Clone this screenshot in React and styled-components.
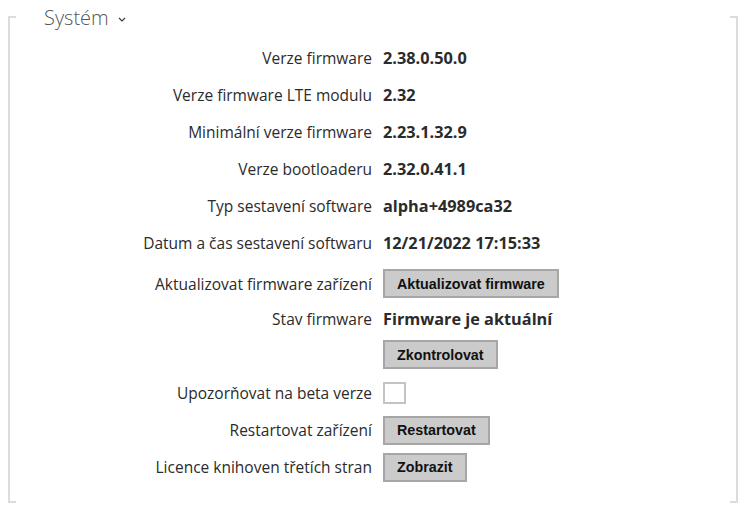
import React from "react";
import styled, { createGlobalStyle } from "styled-components";

const GlobalStyle = createGlobalStyle`
  body {
    margin: 0;
    background: #fff;
    font-family: "Open Sans", "Noto Sans", sans-serif;
    color: #333;
  }
`;

const Page = styled.div`
  padding: 16px 0 0 8px;
  width: 750px;
  height: 516px;
  box-sizing: border-box;
`;

const Frame = styled.section`
  position: relative;
  width: 730px;
  height: 487px;
  box-sizing: border-box;
  border-left: 2px solid #dcdcdc;
  border-right: 2px solid #dcdcdc;
  padding-top: 23.5px;

  &::before,
  &::after {
    content: "";
    position: absolute;
    left: 0;
    right: 0;
    height: 2px;
    pointer-events: none;
    background: linear-gradient(to right, #dcdcdc 6px, transparent 6px, transparent calc(100% - 6px), #dcdcdc calc(100% - 6px));
  }
  &::before {
    top: 0;
  }
  &::after {
    bottom: 0;
  }
`;

const Legend = styled.h2`
  position: absolute;
  top: -8px;
  left: 32px;
  margin: 0;
  padding: 0 2px;
  background: #fff;
  display: flex;
  align-items: center;
  gap: 9px;
  font-size: 20px;
  line-height: 20px;
  font-weight: 300;
  color: #555;
`;

const Rows = styled.div`
  display: grid;
  grid-template-columns: 362px auto;
  column-gap: 11px;
`;

const Row = styled.div`
  display: contents;
`;

const Label = styled.div`
  height: ${(p) => p.h}px;
  margin-top: ${(p) => p.mt || 0}px;
  display: flex;
  align-items: center;
  justify-content: flex-end;
  font-size: 15.5px;
  white-space: nowrap;
  color: #2b2b2b;
`;

const Value = styled.div`
  height: ${(p) => p.h}px;
  margin-top: ${(p) => p.mt || 0}px;
  display: flex;
  align-items: center;
  font-size: 16.3px;
  font-weight: 700;
  white-space: nowrap;
  color: #2b2b2b;
`;

const Button = styled.button`
  height: 29px;
  box-sizing: border-box;
  padding: 0 12px;
  border: 2px solid #a6a6a6;
  background: #cbcbcb;
  font-family: "Liberation Sans", Arial, sans-serif;
  font-weight: 700;
  font-size: 14.3px;
  color: #111;
  cursor: pointer;
`;

const Checkbox = styled.span`
  display: block;
  width: 23px;
  height: 22px;
  box-sizing: border-box;
  border: 2px solid #c4c4c4;
  background: #fff;
`;

const Chevron = () => (
  <svg width="8" height="5" viewBox="0 0 8 5" style={{ marginTop: 2 }}>
    <path d="M1 1 L4 4 L7 1" fill="none" stroke="#333a4a" strokeWidth="1.2" />
  </svg>
);

const rows = [
  { label: "Verze firmware", value: "2.38.0.50.0" },
  { label: "Verze firmware LTE modulu", value: "2.32" },
  { label: "Minimální verze firmware", value: "2.23.1.32.9" },
  { label: "Verze bootloaderu", value: "2.32.0.41.1" },
  { label: "Typ sestavení software", value: "alpha+4989ca32" },
  { label: "Datum a čas sestavení softwaru", value: "12/21/2022 17:15:33" },
  { label: "Aktualizovat firmware zařízení", button: "Aktualizovat firmware", h: 38, mt: 3 },
  { label: "Stav firmware", value: "Firmware je aktuální", h: 33 },
  { label: "", button: "Zkontrolovat", h: 38 },
  { label: "Upozorňovat na beta verze", checkbox: true, h: 38 },
  { label: "Restartovat zařízení", button: "Restartovat" },
  { label: "Licence knihoven třetích stran", button: "Zobrazit" },
];

export default function App() {
  return (
    <Page>
      <GlobalStyle />
      <Frame>
        <Legend>
          Systém <Chevron />
        </Legend>
        <Rows>
          {rows.map((r, i) => {
            const h = r.h || 37;
            return (
              <Row key={i}>
                <Label h={h} mt={r.mt}>{r.label}</Label>
                <Value h={h} mt={r.mt}>
                  {r.button ? <Button>{r.button}</Button> : r.checkbox ? <Checkbox /> : r.value}
                </Value>
              </Row>
            );
          })}
        </Rows>
      </Frame>
    </Page>
  );
}
